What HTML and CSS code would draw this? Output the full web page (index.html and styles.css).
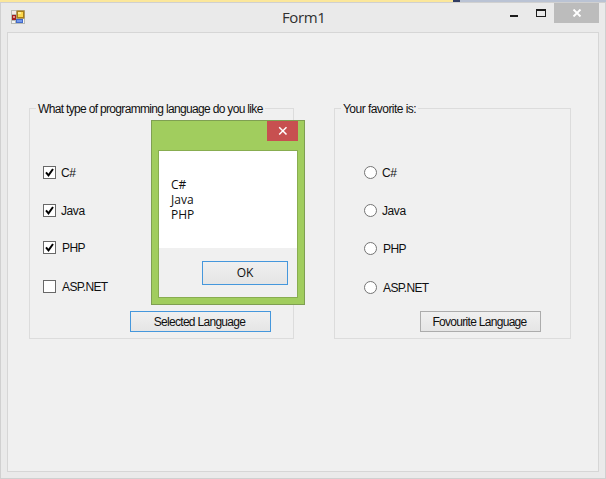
FILE: index.html
```html
<!DOCTYPE html>
<html lang="en">
<head>
<meta charset="utf-8">
<title>Form1</title>
<link rel="stylesheet" href="styles.css">
</head>
<body>
<div class="backdrop"><span class="backdrop-tab"></span><span class="backdrop-corner"></span><span class="backdrop-bar"></span></div>
<main class="window">
  <header class="titlebar">
    <svg class="app-icon" width="14" height="14" viewBox="0 0 14 14">
      <rect width="14" height="14" fill="#b9bbb5"/>
      <rect x="1" y="1" width="4" height="3" fill="#f3e9e6"/>
      <rect x="1" y="5" width="4" height="5" fill="#a32020"/>
      <rect x="2" y="6" width="2" height="2" fill="#e09088"/>
      <rect x="1" y="11" width="3" height="2" fill="#f4f4f4"/>
      <rect x="5.5" y=".5" width="8" height="8" fill="#a87d18"/>
      <rect x="7" y="2" width="5" height="5" fill="#fbd84e"/>
      <rect x="7" y="2" width="3" height="2" fill="#ffeb90"/>
      <rect x="5" y="9" width="7" height="4" fill="#4169c8"/>
      <rect x="6" y="10" width="5" height="2" fill="#7398ec"/>
      <rect x="12" y="9" width="1" height="4" fill="#f4f4f4"/>
    </svg>
    <h1 class="title">Form1</h1>
    <div class="controls">
      <svg width="51" height="20" viewBox="0 0 51 20"><path d="M7 12h8v2H7z" fill="#1c1c1c"/><path d="M33 6h10v8H33zM34 8v5h8V8z" fill="#1c1c1c" fill-rule="evenodd"/></svg>
      <span class="close"><svg width="10" height="8" viewBox="0 0 10 8"><path d="M1.5.5l7 7M8.500.5l-7 7" stroke="#fff" stroke-width="1.900"/></svg></span>
    </div>
  </header>
  <div class="client">
    <fieldset class="group languages">
      <legend><span class="caption-long">What type of programming language do you like</span></legend>
      <div class="options">
        <div class="option"><span class="check"><svg width="11" height="11" viewBox="0 0 11 11"><path d="M2 5.300l2.500 3L9 2" fill="none" stroke="#000" stroke-width="2"/></svg></span><span class="name">C#</span></div>
        <div class="option"><span class="check"><svg width="11" height="11" viewBox="0 0 11 11"><path d="M2 5.300l2.500 3L9 2" fill="none" stroke="#000" stroke-width="2"/></svg></span><span class="name">Java</span></div>
        <div class="option"><span class="check"><svg width="11" height="11" viewBox="0 0 11 11"><path d="M2 5.300l2.500 3L9 2" fill="none" stroke="#000" stroke-width="2"/></svg></span><span class="name wide">PHP</span></div>
        <div class="option"><span class="check"></span><span class="name wide">ASP.NET</span></div>
      </div>
      <div class="button focused"><span>Selected Language</span></div>
    </fieldset>
    <fieldset class="group favorite">
      <legend><span class="caption-short">Your favorite is:</span></legend>
      <div class="options">
        <div class="option"><span class="radio"></span><span class="name">C#</span></div>
        <div class="option"><span class="radio"></span><span class="name">Java</span></div>
        <div class="option"><span class="radio"></span><span class="name wide">PHP</span></div>
        <div class="option"><span class="radio"></span><span class="name wide">ASP.NET</span></div>
      </div>
      <div class="button"><span>Fovourite Language</span></div>
    </fieldset>
  </div>
</main>
<section class="dialog">
  <div class="dialog-bar"><span class="dialog-close"><svg width="10" height="10" viewBox="0 0 10 10"><path d="M1.200 1.200l7.300 7.300M8.500 1.200L1.200 8.500" stroke="#fff" stroke-width="1.500"/></svg></span></div>
  <div class="dialog-body">
    <div class="message"><p>C#</p><p>Java</p><p>PHP</p></div>
    <div class="dialog-footer"><div class="ok">OK</div></div>
  </div>
</section>
</body>
</html>
```
FILE: styles.css
```css
* { box-sizing: border-box; }
body {
  margin: 0;
  width: 606px;
  height: 479px;
  overflow: hidden;
  position: relative;
  background: #eaeaea;
  color: #101010;
  font: 12px/15px "Liberation Sans", sans-serif;
}
.backdrop { display: flex; height: 2px; }
.backdrop-tab { width: 453px; background: #fbe79b; }
.backdrop-corner { width: 7px; background: #313d63; }
.backdrop-bar { flex: 1; background: #bac3d4; }
.window {
  height: 477px;
  padding: 0 6px 7px;
  border: 1px solid #d0d0d0;
  background: #eaeaea;
}
.titlebar { display: flex; height: 29px; }
.app-icon { margin: 7px 0 0 4px; }
.title {
  margin: 3px 0 0 257px;
  width: 50px;
  font: 15px/22px "Open Sans", sans-serif;
  letter-spacing: -0.4px;
  color: #303030;
}
.controls { display: flex; margin-left: auto; }
.close {
  display: flex;
  width: 45px;
  height: 20px;
  align-items: center;
  justify-content: center;
  background: #bcbcbc;
}
.client {
  display: flex;
  align-items: flex-start;
  width: 592px;
  height: 440px;
  padding: 68px 0 0 21px;
  border: 1px solid #d6d6d6;
  background: #f0f0f0;
}
.group {
  min-width: 0;
  height: 238px;
  margin: 0;
  padding: 0;
  border: 1px solid #dcdcdc;
}
.languages { width: 265px; }
.favorite { width: 237px; margin-left: 40px; }
legend { height: 15px; margin-left: 6px; padding: 0 2px; white-space: nowrap; }
.caption-long, .caption-short { display: block; line-height: 17px; }
.caption-long { letter-spacing: -0.67px; }
.caption-short { letter-spacing: -0.54px; }
.options { display: grid; grid-template-rows: 38px 37px 39px 13px; padding: 50px 0 0 13px; }
.favorite .options { grid-template-rows: 38px 38px 39px 13px; padding-left: 29px; }
.option { display: flex; align-items: center; height: 13px; gap: 5px; }
.name { line-height: 13px; padding-top: 1px; letter-spacing: -0.4px; }
.wide { letter-spacing: -0.6px; padding-left: 1px; }
.check { display: block; width: 13px; height: 13px; border: 1px solid #686868; background: #fff; }
.check svg { display: block; }
.radio { width: 13px; height: 13px; border: 1px solid #747474; border-radius: 50%; background: #fff; }
.button {
  width: 141px;
  height: 21px;
  margin: 18px 0 0 100px;
  border: 1px solid #acacac;
  background: linear-gradient(#f0f0f0, #e5e5e5);
  line-height: 20px;
  text-align: center;
  white-space: nowrap;
  letter-spacing: -0.7px;
}
.button span { padding-right: 2px; }
.favorite .button { width: 121px; margin: 17px 0 0 85px; }
.focused { border-color: #4597dc; }
.dialog {
  position: absolute;
  left: 151px;
  top: 120px;
  width: 154px;
  height: 185px;
  padding: 0 6px;
  border: 1px solid #7f9f52;
  background: #a1cd5e;
}
.dialog-bar { display: flex; justify-content: flex-end; height: 29px; }
.dialog-close {
  display: flex;
  width: 31px;
  height: 20px;
  align-items: center;
  justify-content: center;
  background: #c75050;
}
.dialog-body { height: 148px; border: 1px solid #88ad50; background: #f0f0f0; }
.message { height: 97px; padding: 26px 12px; background: #fff; font: 12px/15px "Open Sans", sans-serif; }
.message p { margin: 0; }
.dialog-footer { padding: 13px 0 0 43px; }
.ok {
  width: 86px;
  height: 24px;
  border: 1px solid #4597dc;
  background: linear-gradient(#f0f0f0, #e5e5e5);
  font: 12px/22px "Open Sans", sans-serif;
  text-align: center;
}
```
